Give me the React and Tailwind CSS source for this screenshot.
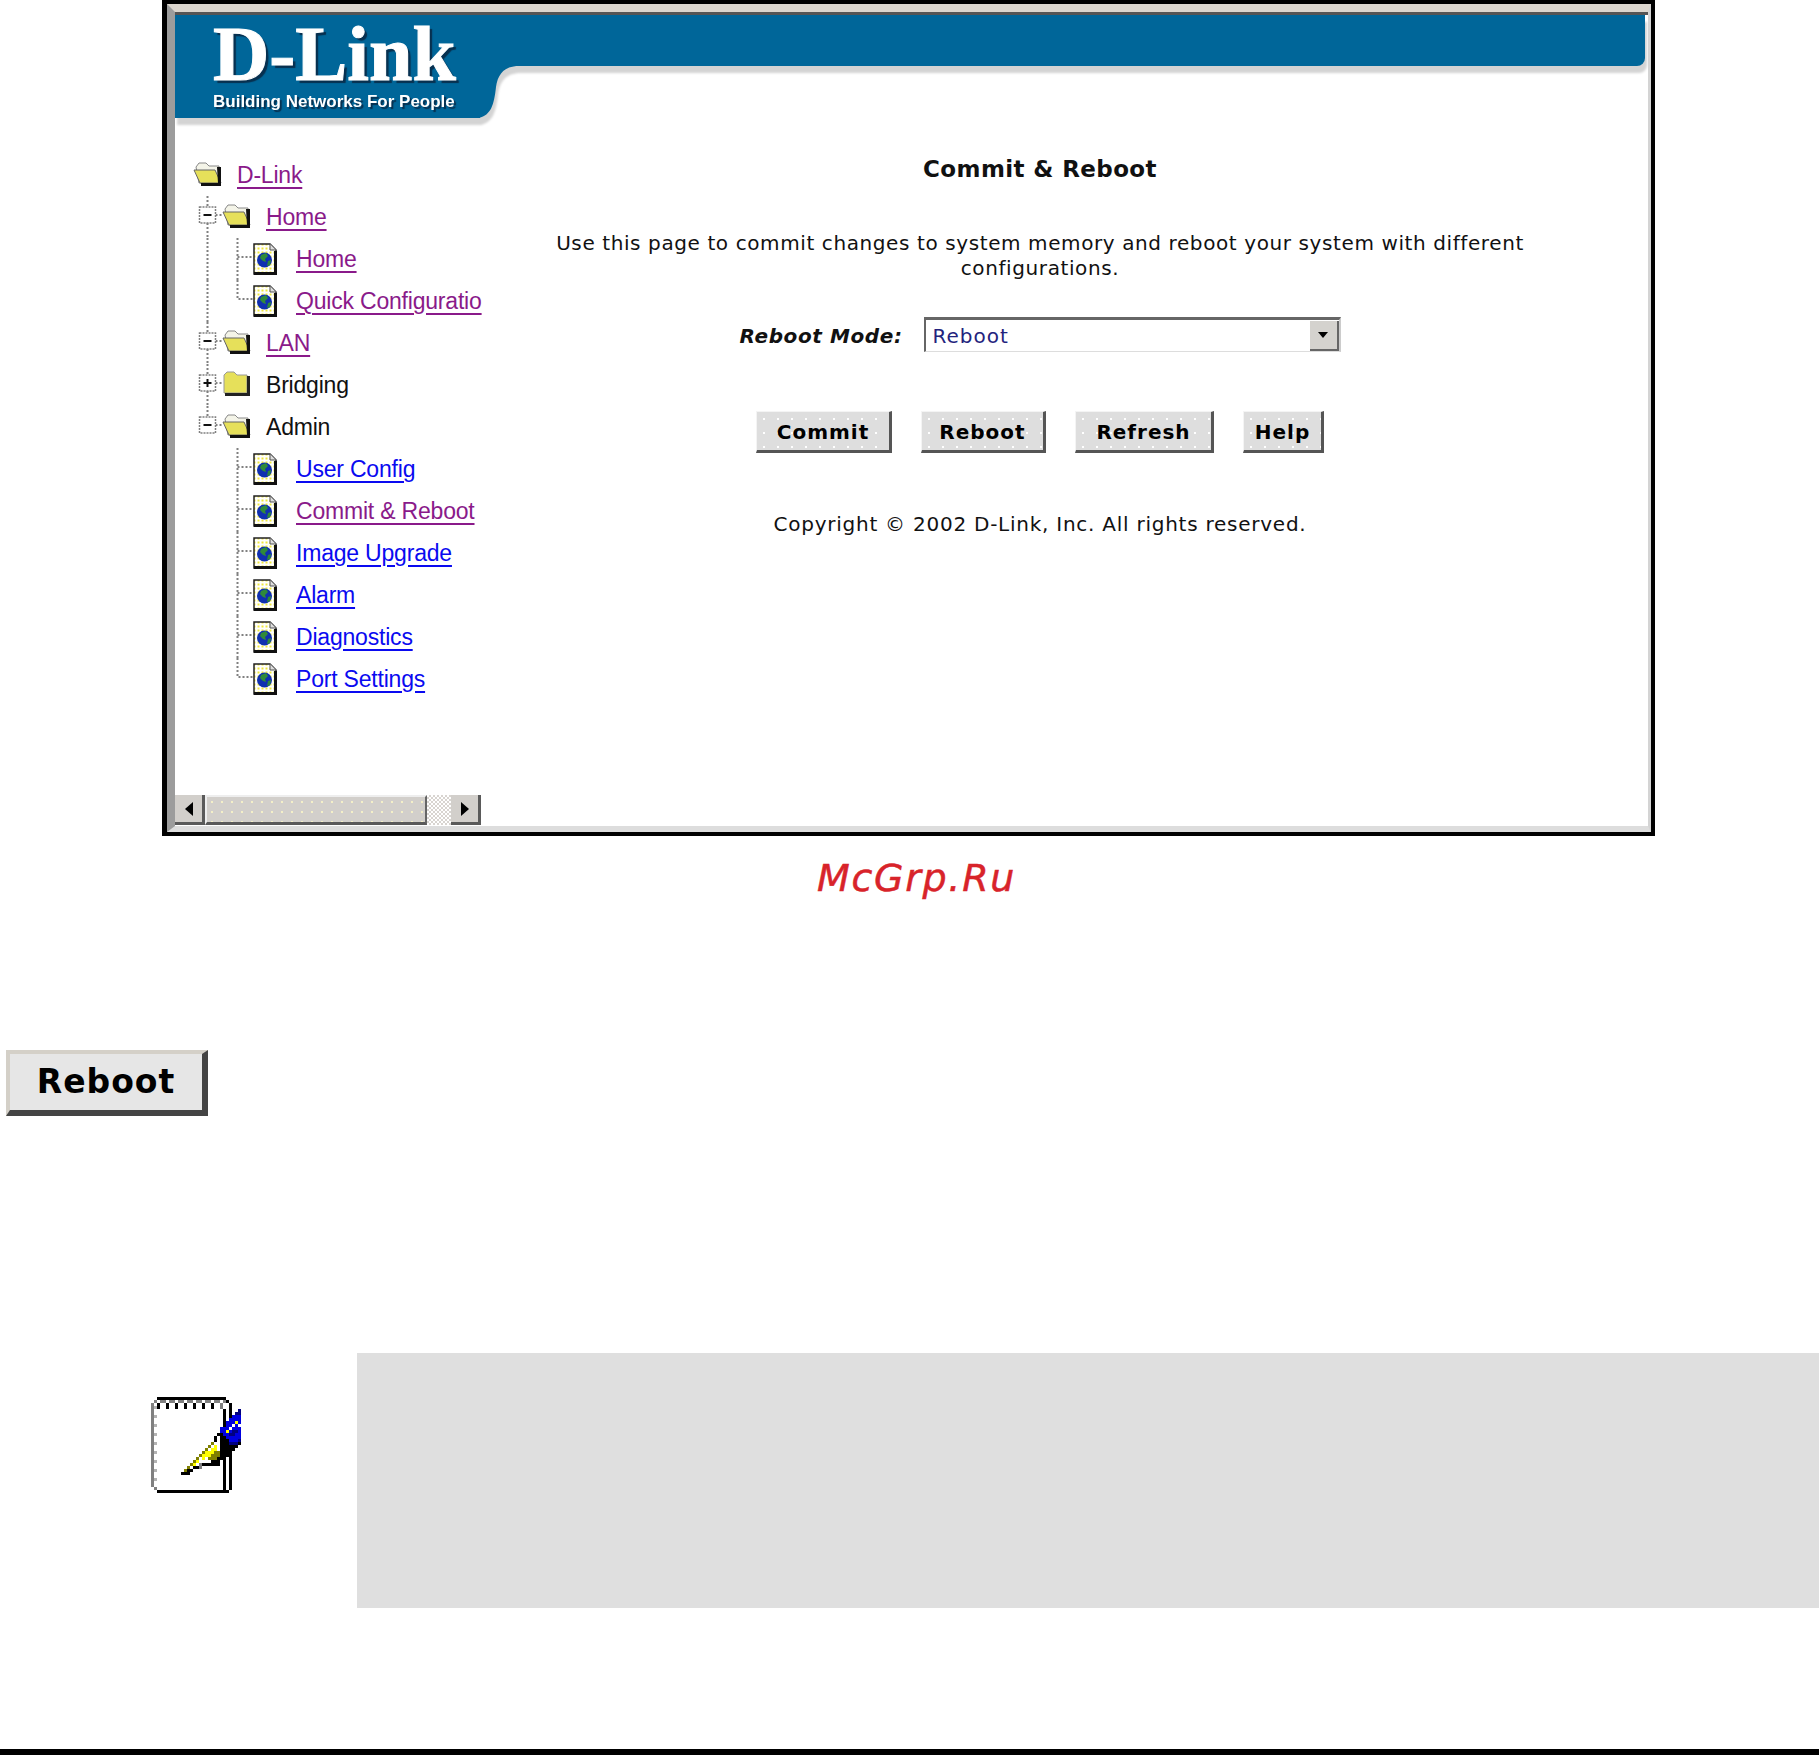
const TREE_FONT = "font-['Liberation_Sans',Arial,sans-serif]";

// [row, fromCol, toCol, colour] on a 3px grid
const K = '#000000', G = '#808080', B = '#0000e0', D = '#000080', Y = '#ffff00', O = '#808000', W = '#ffffff';
const NOTE_PIXELS = [
  [0, 2, 4, K], [0, 5, 7, K], [0, 8, 10, K], [0, 11, 13, K], [0, 14, 16, K], [0, 17, 19, K], [0, 20, 22, K], [0, 23, 24, K],
  [1, 1, 1, G], [1, 3, 4, G], [1, 6, 7, G], [1, 9, 10, G], [1, 12, 13, G], [1, 15, 16, G], [1, 18, 19, G], [1, 21, 22, G], [1, 24, 24, G], [1, 25, 25, K],
  [2, 2, 2, K], [3, 2, 2, K], [2, 5, 5, K], [3, 5, 5, K], [2, 8, 8, K], [3, 8, 8, K], [2, 11, 11, K], [3, 11, 11, K],
  [2, 14, 14, K], [3, 14, 14, K], [2, 17, 17, K], [3, 17, 17, K], [2, 20, 20, K], [3, 20, 20, K], [2, 23, 23, G], [3, 23, 23, G],
  [4, 29, 29, D], [5, 28, 29, D], [6, 27, 29, B], [7, 26, 29, B], [8, 25, 29, B], [8, 28, 28, Y], [9, 25, 29, B], [9, 27, 27, W], [9, 29, 29, W],
  [10, 23, 29, B], [10, 26, 26, W], [11, 23, 29, B], [11, 25, 25, Y], [11, 27, 28, D], [12, 24, 29, B], [12, 22, 23, K], [12, 26, 27, D],
  [13, 25, 29, B], [13, 21, 21, K], [13, 23, 24, K], [14, 26, 28, B], [14, 21, 21, K], [14, 23, 25, K], [14, 29, 29, D],
  [15, 20, 20, O], [15, 23, 29, K], [15, 26, 28, D], [16, 19, 19, O], [16, 21, 21, Y], [16, 23, 28, K], [17, 18, 18, O], [17, 20, 21, Y], [17, 23, 27, K],
  [18, 17, 17, O], [18, 18, 20, Y], [18, 21, 22, O], [18, 23, 26, K], [19, 16, 16, O], [19, 17, 19, Y], [19, 20, 22, O], [19, 23, 25, K],
  [20, 15, 15, O], [20, 17, 17, Y], [20, 19, 21, O], [20, 22, 24, K], [21, 14, 14, O], [21, 15, 15, Y], [21, 20, 22, K],
  [22, 13, 13, O], [22, 14, 14, Y], [22, 16, 16, G], [22, 17, 22, K], [23, 12, 12, O], [23, 14, 15, K], [23, 16, 16, G], [24, 11, 11, O], [24, 12, 13, K], [25, 10, 12, K],
];

function NoteIcon() {
  return (
    <svg width="102" height="96" viewBox="0 0 34 32" shapeRendering="crispEdges" className="shrink-0 mt-[44px]">
      <rect x="0" y="2" width="1" height="28" fill={G} />
      {[3, 6, 9, 12, 15, 18, 21, 24, 27].map((r) => (
        <rect key={r} x="1" y={r} width="1" height="1" fill={G} opacity="0.6" />
      ))}
      <rect x="1" y="30" width="1" height="1" fill={G} />
      <rect x="2" y="31" width="24" height="1" fill={K} />
      <rect x="24" y="4" width="1" height="27" fill={K} />
      <rect x="26" y="2" width="1" height="29" fill={K} />
      <rect x="25" y="30" width="1" height="1" fill={W} />
      {NOTE_PIXELS.map(([r, a, b, c], i) => (
        <rect key={i} x={a} y={r} width={b - a + 1} height="1" fill={c} />
      ))}
    </svg>
  );
}

function OpenFolder() {
  return (
    <svg width="30" height="25" viewBox="0 0 30 25" className="shrink-0 -mt-[4px]">
      <path d="M3 6 L6 2 H13 L16 5 H26 V22 H6 Z" fill="#f4f4e8" stroke="#888" strokeWidth="1" />
      <path d="M1 9 H22 L28 22 H7 Z" fill="#e6e05a" stroke="#666" strokeWidth="1" />
      <path d="M24 6 H28 V25 H8 V22 H25 Z" fill="#111" />
    </svg>
  );
}

function ClosedFolder() {
  return (
    <svg width="30" height="25" viewBox="0 0 30 25" className="shrink-0 -mt-[4px]">
      <path d="M2 4 L5 1 H12 L15 4 H25 V22 H2 Z" fill="#e6e05a" stroke="#999" strokeWidth="1" />
      <path d="M25 5 H28 V25 H3 V22 H25 Z" fill="#222" />
    </svg>
  );
}

function PageIcon() {
  return (
    <svg width="24" height="32" viewBox="0 0 24 32" className="shrink-0 -mt-[1px]">
      <defs>
        <pattern id="paperDots" width="4" height="4" patternUnits="userSpaceOnUse">
          <rect width="4" height="4" fill="#fff" />
          <rect x="0.5" y="0.5" width="2" height="2" fill="#efe83c" />
        </pattern>
      </defs>
      <path d="M1 1 H17 L23 7 V31 H1 Z" fill="url(#paperDots)" stroke="#222" strokeWidth="1.5" />
      <path d="M21 8 H24 V32 H1 V29 H21 Z" fill="#111" />
      <path d="M17 1 V7 H23" fill="#ddd" stroke="#555" strokeWidth="1" />
      <circle cx="11.5" cy="17" r="7.5" fill="#1030b0" />
      <path d="M8 12 L13 10 L15 13 L12 16 L13 19 L10 18 L7 15 Z" fill="#2f8a3a" />
      <path d="M15 18 L18 17 L17 22 L14 23 Z" fill="#2f8a3a" />
    </svg>
  );
}

// dotted tree guides, one per row cell. kind: line, branch, end, minus, minusEnd, plus
function Guide({ kind, width }) {
  const isBox = kind === 'minus' || kind === 'minusEnd' || kind === 'plus';
  const cx = width === 29 ? 14.5 : 15.5;
  const dots = { stroke: '#808080', strokeWidth: 2, strokeDasharray: '2 2', fill: 'none' };
  return (
    <svg width={width} height="42" viewBox={`0 0 ${width} 42`} className="shrink-0">
      {kind === 'line' && <path d={`M${cx} 0 V42`} {...dots} />}
      {kind === 'branch' && <path d={`M${cx} 0 V42 M${cx} 19 H${width}`} {...dots} />}
      {kind === 'end' && <path d={`M${cx} 0 V19 H${width}`} {...dots} />}
      {isBox && (
        <>
          <path d={`M${cx} 0 V11 ${kind === 'minusEnd' ? '' : `M${cx} 27 V42`} M${cx + 8} 19 H${width}`} {...dots} />
          <rect x={cx - 8} y="11" width="16" height="16" fill="#fff" stroke="#808080" strokeWidth="1.5" strokeDasharray="2 1" />
          <path d={`M${cx - 4} 19 H${cx + 4}`} stroke="#111" strokeWidth="2" />
          {kind === 'plus' && <path d={`M${cx} 15 V23`} stroke="#111" strokeWidth="2" />}
        </>
      )}
    </svg>
  );
}

function Label({ to, children }) {
  const color = to === 'visited' ? 'text-[#8a1a8a] underline underline-offset-[4px]' : to === 'link' ? 'text-[#0a0af0] underline underline-offset-[4px]' : 'text-[#111]';
  return <span className={`${TREE_FONT} text-[23px] tracking-[-0.2px] whitespace-nowrap ${color}`}>{children}</span>;
}

function Level1({ kind, open, to, children }) {
  return (
    <div className="flex items-center h-[42px]">
      <Guide kind={kind} width={29} />
      {open ? <OpenFolder /> : <ClosedFolder />}
      <span className="ml-[14px]">
        <Label to={to}>{children}</Label>
      </span>
    </div>
  );
}

function Level2({ parentLine, kind, to, children }) {
  return (
    <div className="flex items-center h-[42px]">
      {parentLine ? <Guide kind="line" width={29} /> : <div className="w-[29px] shrink-0" />}
      <Guide kind={kind} width={31} />
      <PageIcon />
      <span className="ml-[19px]">
        <Label to={to}>{children}</Label>
      </span>
    </div>
  );
}

function ScrollArrow({ dir }) {
  return (
    <svg width="10" height="14" viewBox="0 0 10 14">
      <path d={dir === 'left' ? 'M9 0 V14 L1 7 Z' : 'M1 0 V14 L9 7 Z'} fill="#000" />
    </svg>
  );
}

function ScrollBar() {
  return (
    <div className="flex h-[30px] w-[306px] mt-auto mb-px bg-[repeating-conic-gradient(#d8d4d0_0_25%,#ffffff_0_50%)] bg-[length:4px_4px]">
      <div className="w-[30px] flex items-center justify-center bg-[#d2cfcb] border-r-[3px] border-b-[3px] border-[#5a5a5a]">
        <ScrollArrow dir="left" />
      </div>
      <div className="w-[222px] bg-[#d2cfcb] bg-[radial-gradient(#f4f0c8_1px,transparent_1px)] bg-[length:10px_10px] border-l-2 border-t-2 border-[#eeeeee] border-r-[2px] border-r-[#666] border-b-[3px] border-b-[#5a5a5a]" />
      <div className="flex-1" />
      <div className="w-[30px] flex items-center justify-center bg-[#d2cfcb] border-r-[3px] border-b-[3px] border-[#5a5a5a]">
        <ScrollArrow dir="right" />
      </div>
    </div>
  );
}

function Sidebar() {
  return (
    <div className="w-[315px] shrink-0 flex flex-col pt-[36px]">
      <div className="pl-[18px]">
        <div className="flex items-center h-[42px]">
          <OpenFolder />
          <span className="ml-[14px]">
            <Label to="visited">D-Link</Label>
          </span>
        </div>
        <Level1 kind="minus" open to="visited">Home</Level1>
        <Level2 parentLine kind="branch" to="visited">Home</Level2>
        <Level2 parentLine kind="end" to="visited">Quick Configuratio</Level2>
        <Level1 kind="minus" open to="visited">LAN</Level1>
        <Level1 kind="plus">Bridging</Level1>
        <Level1 kind="minusEnd" open>Admin</Level1>
        <Level2 kind="branch" to="link">User Config</Level2>
        <Level2 kind="branch" to="visited">Commit &amp; Reboot</Level2>
        <Level2 kind="branch" to="link">Image Upgrade</Level2>
        <Level2 kind="branch" to="link">Alarm</Level2>
        <Level2 kind="branch" to="link">Diagnostics</Level2>
        <Level2 kind="end" to="link">Port Settings</Level2>
      </div>
      <ScrollBar />
    </div>
  );
}

function FormButton({ width, children }) {
  return (
    <button
      className={`h-[42px] pt-[2px] ${width} bg-[#dedede] bg-[radial-gradient(#ffffff_1px,transparent_1px)] bg-[length:14px_14px] border-t border-l border-[#f4f4f4] border-r-[3px] border-r-[#555] border-b-[3px] border-b-[#555] font-['DejaVu_Sans',sans-serif] font-bold text-[20px] tracking-[1px] text-black`}
    >
      {children}
    </button>
  );
}

function Content() {
  return (
    <div className="w-[1100px] shrink-0 flex flex-col items-center font-['DejaVu_Sans',sans-serif] text-[#111]">
      <h1 className="mt-[36px] h-[30px] leading-[30px] font-bold text-[23px] tracking-[0.4px]">Commit &amp; Reboot</h1>
      <p className="mt-[47px] text-center text-[20px] tracking-[0.6px] leading-[25px]">
        Use this page to commit changes to system memory and reboot your system with different
        <br />
        configurations.
      </p>
      <div className="mt-[36px] flex items-center h-[35px]">
        <span className="mt-[2px] font-bold italic text-[20px] tracking-[0.6px] whitespace-nowrap">Reboot Mode:</span>
        <div className="ml-[21px] w-[417px] h-[35px] flex items-center justify-between bg-white border-t-[3px] border-l-[2px] border-[#666] border-b border-b-[#ddd] border-r-2 border-r-[#ccc]">
          <span className="pl-[7px] text-[20px] tracking-[1px] text-[#23237d]">Reboot</span>
          <div className="w-[29px] h-[30px] flex items-center justify-center bg-[#d4d2ce] border-r-2 border-b-2 border-[#666]">
            <svg width="10" height="6" viewBox="0 0 10 6">
              <path d="M0 0 H10 L5 6 Z" fill="#000" />
            </svg>
          </div>
        </div>
      </div>
      <div className="mt-[59px] flex gap-[29px]">
        <FormButton width="w-[136px]">Commit</FormButton>
        <FormButton width="w-[125px]">Reboot</FormButton>
        <FormButton width="w-[139px]">Refresh</FormButton>
        <FormButton width="w-[81px]">Help</FormButton>
      </div>
      <p className="mt-[58px] text-[20px] tracking-[0.75px] leading-[26px]">Copyright © 2002 D-Link, Inc. All rights reserved.</p>
    </div>
  );
}

function Banner() {
  return (
    <div className="flex items-start h-[103px] shrink-0 [filter:drop-shadow(2px_7px_1px_#d4d4d4)]">
      <div className="w-[305px] h-[103px] bg-[#006699] flex flex-col pl-[38px] text-white">
        <div className="font-['Liberation_Serif',serif] font-bold text-[78px] leading-[70px] mt-[4px] [-webkit-text-stroke:1px_white] [text-shadow:3px_3px_1px_#07304f]">
          D-Link
        </div>
        <div className="font-['Liberation_Sans',sans-serif] font-bold text-[17px] leading-[20px] mt-[3px] whitespace-nowrap [text-shadow:2px_2px_1px_#07304f]">
          Building Networks For People
        </div>
      </div>
      <svg width="45" height="103" viewBox="0 0 45 103" className="shrink-0 -ml-px">
        <path d="M0 0 H45 V51 H40 C26 51 19 58 17 72 C15 90 12 100 0 103 Z" fill="#006699" />
      </svg>
      <div className="flex-1 h-[51px] bg-[#006699] rounded-br-[8px] mr-[3px]" />
    </div>
  );
}

function Frame() {
  return (
    <div className="ml-[162px] w-[1493px] h-[836px] border-[4px] border-l-[5px] border-black">
      <div className="h-full flex flex-col border-t-[8px] border-t-[#dcd6ce] border-l-[8px] border-l-[#9c9c9c] border-r-[3px] border-r-[#d4d4d4] border-b-[6px] border-b-[#dddddd] bg-white">
        <div className="h-[3px] shrink-0 bg-[#555555]" />
        <Banner />
        <div className="flex flex-1 min-h-0">
          <Sidebar />
          <Content />
        </div>
      </div>
    </div>
  );
}

export default function App() {
  return (
    <div className="w-[1819px] h-[1755px] bg-white overflow-hidden">
      <Frame />
      <div className="mt-[20px] h-[44px] ml-[817px] font-['DejaVu_Sans',sans-serif] italic text-[38px] leading-[44px] tracking-[1.7px] [-webkit-text-stroke:0.5px_#d8232a] text-[#d8232a] whitespace-nowrap">
        McGrp.Ru
      </div>
      <div className="mt-[150px] ml-[6px] w-[202px] h-[66px] flex items-center justify-center bg-[#e6e6e6] border-t-[4px] border-l-[4px] border-[#d4d0c8] border-r-[6px] border-r-[#444] border-b-[6px] border-b-[#444] font-['DejaVu_Sans',sans-serif] font-bold text-[33px] tracking-[1px] text-black">
        Reboot
      </div>
      <div className="mt-[237px] h-[255px] flex pl-[151px]">
        <NoteIcon />
        <div className="ml-[104px] flex-1 bg-[#dfdfdf]" />
      </div>
      <div className="mt-[141px] h-[6px] bg-black" />
    </div>
  );
}
